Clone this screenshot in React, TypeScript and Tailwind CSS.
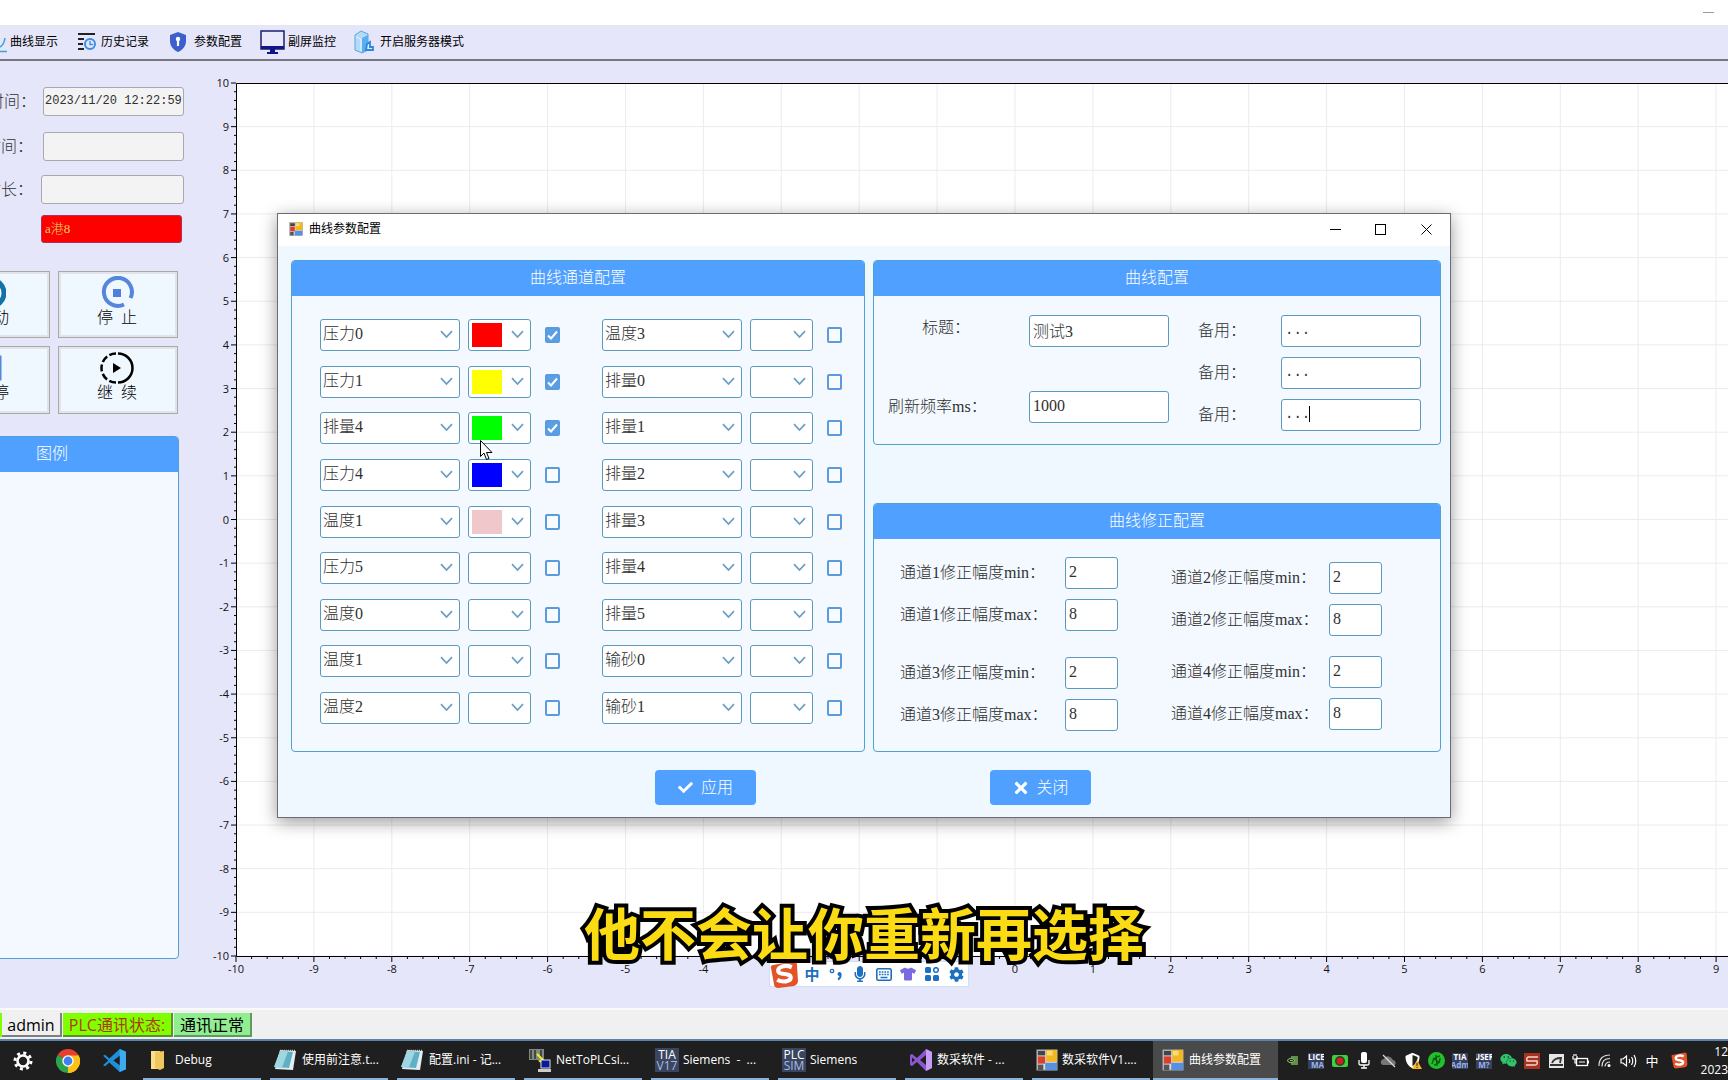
import React from "react";
import { FaCheck, FaTimes, FaMicrophone, FaTshirt, FaCog, FaWeixin, FaShieldAlt } from "react-icons/fa";

const channelsLeft = [
  { name: "压力0", color: "bg-[#ff0000]", on: true },
  { name: "压力1", color: "bg-[#ffff00]", on: true },
  { name: "排量4", color: "bg-[#00ff00]", on: true },
  { name: "压力4", color: "bg-[#0000ff]", on: false },
  { name: "温度1", color: "bg-[#f0c8cb]", on: false },
  { name: "压力5", color: "", on: false },
  { name: "温度0", color: "", on: false },
  { name: "温度1", color: "", on: false },
  { name: "温度2", color: "", on: false },
];

const channelsRight = ["温度3", "排量0", "排量1", "排量2", "排量3", "排量4", "排量5", "输砂0", "输砂1"].map((name) => ({
  name,
  color: "",
  on: false,
}));

type Channel = { name: string; color: string; on: boolean };

const boxClass = "h-8 rounded-[3px] border border-[#5b9ac0] bg-white text-[#303030]";

const Chevron = () => (
  <svg className="pointer-events-none absolute right-[7px] top-[11px]" width="13" height="9" viewBox="0 0 13 9">
    <path d="M1 1.2 L6.5 7 L12 1.2" fill="none" stroke="#6a9ec2" strokeWidth="1.7" />
  </svg>
);

const ChannelRow = ({ channel }: { channel: Channel }) => (
  <div className="flex items-center">
    <div className="relative w-[140px]">
      <select aria-label="通道" className={`${boxClass} block w-full appearance-none pl-[2px] pb-[2px]`}>
        <option>{channel.name}</option>
      </select>
      <Chevron />
    </div>
    <div className="relative ml-2 w-[63px]">
      <select aria-label="颜色" className={`${boxClass} block w-full appearance-none`}></select>
      {channel.color && <span className={`absolute left-1 top-1 h-6 w-[30px] ${channel.color}`}></span>}
      <Chevron />
    </div>
    <div className="relative ml-[14px] h-4 w-[15px]">
      <input
        type="checkbox"
        aria-label="启用"
        defaultChecked={channel.on}
        className="block h-4 w-[15px] appearance-none rounded-[2px] border-2 border-[#5b9bdc] bg-[#f7fbff] checked:bg-[#5b9ee8]"
      />
      {channel.on && (
        <svg className="pointer-events-none absolute left-0 top-0" width="15" height="16" viewBox="0 0 15 16">
          <path d="M3 8.5 L6 11.5 L12 4.5" fill="none" stroke="#fff" strokeWidth="2" />
        </svg>
      )}
    </div>
  </div>
);

const Panel = ({ title, className, children }: { title: string; className: string; children: React.ReactNode }) => (
  <section className={`flex flex-col overflow-hidden rounded-[4px] border border-[#50a0d0] bg-[#f3f9ff] ${className}`}>
    <h2 className="flex h-[35px] shrink-0 items-center justify-center bg-[#50a0ff] pb-[2px] text-white">{title}</h2>
    {children}
  </section>
);

const Field = ({ label, id, value, labelClass, inputClass }: { label: string; id: string; value: string; labelClass: string; inputClass: string }) => (
  <div className="flex items-center">
    <label htmlFor={id} className={`whitespace-nowrap text-[#303030] ${labelClass}`}>
      {label}
    </label>
    <input id={id} defaultValue={value} className={`${boxClass} px-[3px] pb-[3px] outline-none ${inputClass}`} />
  </div>
);

const FormIcon = ({ size }: { size: number }) => (
  <svg width={size} height={size} viewBox="0 0 24 24">
    <rect x="1" y="1" width="22" height="22" fill="#ddd" stroke="#999" />
    <rect x="2" y="2" width="8" height="5" fill="#444" />
    <rect x="2" y="8" width="8" height="8" fill="#d9412f" />
    <rect x="11" y="1" width="12" height="13" fill="#f2b824" />
    <rect x="12" y="2" width="6" height="5" fill="#fbdc7a" />
    <rect x="2" y="17" width="6" height="6" fill="#555" />
    <rect x="10" y="15" width="13" height="8" fill="#5a8fe0" />
  </svg>
);

const Dialog = () => (
  <div
    role="dialog"
    aria-label="曲线参数配置"
    className="absolute left-1/2 top-[213px] flex h-[605px] w-[1174px] -translate-x-1/2 flex-col border border-[#6a6d75] bg-[#f0f8ff] shadow-[0_4px_16px_rgba(0,0,0,0.4)]"
  >
    <div className="flex h-8 shrink-0 items-center bg-white pb-[2px] pl-[11px] font-['Open_Sans','Noto_Sans_CJK_SC',sans-serif] text-[12px] font-normal text-black">
      <FormIcon size={14} />
      <span className="ml-[6px] flex-1">曲线参数配置</span>
      <button aria-label="最小化" className="flex w-[45px] justify-center">
        <svg width="11" height="11" viewBox="0 0 11 11"><path d="M0 5.5H11" stroke="#000" /></svg>
      </button>
      <button aria-label="最大化" className="flex w-[45px] justify-center">
        <svg width="11" height="11" viewBox="0 0 11 11"><rect x="0.5" y="0.5" width="10" height="10" fill="none" stroke="#000" /></svg>
      </button>
      <button aria-label="关闭窗口" className="flex w-[47px] justify-center">
        <svg width="11" height="11" viewBox="0 0 11 11"><path d="M0.5 0.5L10.5 10.5M10.5 0.5L0.5 10.5" stroke="#000" /></svg>
      </button>
    </div>

    <div className="flex gap-2 pl-[13px] pr-[9px] pt-[14px]">
      <Panel title="曲线通道配置" className="h-[492px] w-[574px] shrink-0">
        <div className="flex flex-1 gap-[42px] px-7 pb-[27px] pt-[23px]">
          <div className="flex flex-col justify-between">
            {channelsLeft.map((c, i) => (
              <ChannelRow key={i} channel={c} />
            ))}
          </div>
          <div className="flex flex-col justify-between">
            {channelsRight.map((c, i) => (
              <ChannelRow key={i} channel={c} />
            ))}
          </div>
        </div>
      </Panel>

      <div className="flex flex-1 flex-col justify-between">
        <Panel title="曲线配置" className="h-[185px]">
          <div className="flex gap-[29px] pl-[14px] pt-[19px]">
            <div className="flex flex-col gap-11">
              <Field id="title" label="标题：" value="测试3" labelClass="w-[141px] pb-[6px] pl-[34px]" inputClass="w-[140px]" />
              <Field id="freq" label="刷新频率ms：" value="1000" labelClass="w-[141px]" inputClass="w-[140px]" />
            </div>
            <div className="flex flex-col gap-[10px]">
              <Field id="spare1" label="备用：" value="..." labelClass="w-[83px]" inputClass="w-[140px] font-['Liberation_Mono',monospace] text-[14px]" />
              <Field id="spare2" label="备用：" value="..." labelClass="w-[83px]" inputClass="w-[140px] font-['Liberation_Mono',monospace] text-[14px]" />
              <div className="relative">
                <Field id="spare3" label="备用：" value="..." labelClass="w-[83px]" inputClass="w-[140px] font-['Liberation_Mono',monospace] text-[14px]" />
                <span className="absolute left-[111px] top-[7px] h-4 w-px bg-black"></span>
              </div>
            </div>
          </div>
        </Panel>

        <Panel title="曲线修正配置" className="h-[249px]">
          <div className="flex items-start gap-[53px] pl-[26px]">
            <div className="flex flex-col gap-[26px] pt-[18px]">
              {[1, 3].map((n) => (
                <div key={n} className="flex flex-col gap-[10px]">
                  <Field id={`min${n}`} label={`通道${n}修正幅度min：`} value="2" labelClass="w-[165px]" inputClass="w-[53px]" />
                  <Field id={`max${n}`} label={`通道${n}修正幅度max：`} value="8" labelClass="w-[165px]" inputClass="w-[53px]" />
                </div>
              ))}
            </div>
            <div className="flex flex-col gap-5 pt-[23px]">
              {[2, 4].map((n) => (
                <div key={n} className="flex flex-col gap-[10px]">
                  <Field id={`min${n}`} label={`通道${n}修正幅度min：`} value="2" labelClass="w-[158px]" inputClass="w-[53px]" />
                  <Field id={`max${n}`} label={`通道${n}修正幅度max：`} value="8" labelClass="w-[158px]" inputClass="w-[53px]" />
                </div>
              ))}
            </div>
          </div>
        </Panel>
      </div>
    </div>

    <div className="flex justify-center gap-[234px] pl-[18px] pt-[18px]">
      <button className="flex h-[35px] w-[101px] items-center justify-center gap-2 rounded-[4px] bg-[#50a0ff] text-white">
        <FaCheck size={15} />
        应用
      </button>
      <button className="flex h-[35px] w-[101px] items-center justify-center gap-[6px] rounded-[4px] bg-[#50a0ff] text-white">
        <FaTimes size={18} />
        关闭
      </button>
    </div>
  </div>
);

// plot origin inside the svg, and pixels per unit
const X0 = 36;
const Y0 = 22;
const STEP_X = 77.9;
const STEP_Y = 43.65;

const Chart = () => {
  const bottom = Y0 + 20 * STEP_Y;
  const units = Array.from({ length: 21 }, (_, i) => i);
  const minor = Array.from({ length: 101 }, (_, i) => i);
  return (
    <svg className="h-[930px] w-[1640px] shrink-0" fontSize="11" fill="#111">
      <rect x={X0} y={Y0} width={20 * STEP_X} height={20 * STEP_Y} fill="#fff" />
      {units.map((i) => (
        <g key={i}>
          <path d={`M${X0 + i * STEP_X} ${Y0}V${bottom}M${X0} ${Y0 + i * STEP_Y}H${X0 + 20 * STEP_X}`} stroke="#ececec" />
        </g>
      ))}
      {minor.map((i) => (
        <path
          key={i}
          d={`M${X0 + (i * STEP_X) / 5} ${bottom}v${i % 5 ? 3 : 6}M${X0} ${Y0 + (i * STEP_Y) / 5}h${i % 5 ? -2 : -5}`}
          stroke="#000"
        />
      ))}
      <path d={`M${X0 + 20 * STEP_X} 22.5H${X0 + 0.5}V${Math.floor(bottom) + 0.5}H${X0 + 20 * STEP_X}`} fill="none" stroke="#000" />
      {units.map((i) => (
        <g key={i}>
          <text x={X0 - 7} y={Y0 + i * STEP_Y + 4} textAnchor="end">{10 - i}</text>
          <text x={X0 + i * STEP_X} y={bottom + 17} textAnchor="middle">{i - 10}</text>
        </g>
      ))}
    </svg>
  );
};

const SideButton = ({ text, children }: { text: string; children: React.ReactNode }) => (
  <button className="flex w-[120px] shrink-0 flex-col items-center border border-[#a9a9a9] bg-[#f0f8ff] pr-[2px] pt-1 text-black shadow-[inset_0_0_0_2px_#e2e4ea]">
    {children}
    <span className="whitespace-pre leading-4">{text}</span>
  </button>
);

const Sidebar = () => (
  <aside className="flex w-[184px] shrink-0 flex-col items-end pt-[26px] text-[#303030]">
    <div className="flex items-center justify-end">
      <label htmlFor="now" className="whitespace-nowrap pr-[7px]">时间：</label>
      <input id="now" readOnly defaultValue="2023/11/20 12:22:59" className="h-[29px] w-[141px] shrink-0 rounded-[3px] border border-[#a8a8b0] bg-[#f3f3f3] px-px pb-[2px] font-['Liberation_Mono',monospace] text-[12px]" />
    </div>
    <div className="mt-4 flex items-center justify-end">
      <label htmlFor="start" className="whitespace-nowrap pr-[10px]">时间：</label>
      <input id="start" readOnly className="h-[29px] w-[141px] shrink-0 rounded-[3px] border border-[#a8a8b0] bg-[#f3f3f3]" />
    </div>
    <div className="mt-[14px] flex items-center justify-end">
      <label htmlFor="span" className="whitespace-nowrap pr-2">时长：</label>
      <input id="span" readOnly className="h-[29px] w-[143px] shrink-0 rounded-[3px] border border-[#a8a8b0] bg-[#f3f3f3]" />
    </div>
    <input aria-label="名称" defaultValue="a港8" className="mr-[2px] mt-[11px] h-7 w-[141px] rounded-[3px] border border-[#b03060] bg-[#ff0000] px-[3px] pb-[3px] text-[13px] text-[#e0d060]" />

    <div className="mr-[6px] mt-7 flex h-[67px] justify-end gap-2">
      <SideButton text="启  动">
        <svg width="34" height="34" viewBox="0 0 34 34"><circle cx="19" cy="17" r="13" fill="none" stroke="#1272a8" strokeWidth="5" /></svg>
      </SideButton>
      <SideButton text="停  止">
        <svg width="34" height="34" viewBox="0 0 34 34">
          <path d="M24 28.5 A14 14 0 1 1 30.5 22" fill="none" stroke="#5685dc" strokeWidth="4" />
          <rect x="13" y="13" width="8" height="8" fill="#4f80e0" />
        </svg>
      </SideButton>
    </div>
    <div className="mr-[6px] mt-2 flex h-[68px] justify-end gap-2">
      <SideButton text="暂  停">
        <svg width="34" height="34" viewBox="0 0 34 34"><rect x="7" y="6" width="21" height="22" fill="none" stroke="#5685dc" strokeWidth="3" /></svg>
      </SideButton>
      <SideButton text="继  续">
        <svg width="34" height="34" viewBox="0 0 34 34">
          <path d="M18 2.5 A14.5 14.5 0 0 1 18 31.5" fill="none" stroke="#000" strokeWidth="2.5" />
          <path d="M16 31.5 A14.5 14.5 0 0 1 16 2.5" fill="none" stroke="#000" strokeWidth="2.5" strokeDasharray="7 2.6" />
          <path d="M13 12V22L21 17Z" fill="#000" />
        </svg>
      </SideButton>
    </div>

    <section className="mr-[5px] mt-[22px] flex h-[523px] w-[254px] shrink-0 flex-col overflow-hidden rounded-[4px] border border-[#50a0d8] bg-[#f3f9ff]">
      <h2 className="flex h-[35px] items-center justify-center bg-[#50a0ff] pb-[2px] text-white">图例</h2>
    </section>
  </aside>
);

const Toolbar = () => (
  <nav className="flex h-[36px] shrink-0 items-center overflow-hidden border-b-2 border-[#77777f] font-['Open_Sans','Noto_Sans_CJK_SC',sans-serif] text-[12px] font-normal text-black">
    <button className="flex items-center gap-[3px]">
      <svg width="7" height="22" viewBox="0 0 7 22"><path d="M0 16 Q4 14 5 7M0 20.5H7" fill="none" stroke="#3aa6d8" strokeWidth="1.6" /></svg>
      曲线显示
    </button>
    <button className="ml-[19px] flex items-center gap-[5px]">
      <svg width="19" height="20" viewBox="0 0 19 20">
        <path d="M1 2H18M1 7H7M1 12H6M1 17H7" stroke="#222" strokeWidth="2" />
        <circle cx="13" cy="12" r="5" fill="none" stroke="#3b8ee8" strokeWidth="2" />
        <path d="M13 9V12.5H16" fill="none" stroke="#3b8ee8" strokeWidth="1.4" />
      </svg>
      历史记录
    </button>
    <button className="ml-[21px] flex items-center gap-2">
      <svg width="16" height="20" viewBox="0 0 16 20">
        <path d="M8 0L16 3V9C16 14.5 12.5 18 8 20C3.5 18 0 14.5 0 9V3Z" fill="#3d5fcb" />
        <path d="M8 6V14" stroke="#fff" strokeWidth="2.2" />
        <circle cx="8" cy="7" r="2.2" fill="#fff" />
      </svg>
      参数配置
    </button>
    <button className="ml-[18px] flex items-center gap-[3px]">
      <svg width="25" height="24" viewBox="0 0 25 24">
        <rect x="1" y="1" width="23" height="18" fill="#e8eafc" stroke="#1b1f6e" strokeWidth="1.5" />
        <path d="M1 17.5H24" stroke="#10158a" strokeWidth="3" />
        <path d="M10 19H15V22H18V24H7V22H10Z" fill="#10158a" />
      </svg>
      副屏监控
    </button>
    <button className="ml-[18px] flex items-center gap-[5px]">
      <svg width="21" height="24" viewBox="0 0 21 24">
        <path d="M1 5L7 1L14 4V20L8 23L1 20Z" fill="#b4daf6" stroke="#5aa5dc" />
        <path d="M8 8V23L14 20V5Z" fill="#5aaef0" />
        <path d="M2 7L7 9V21" fill="none" stroke="#e8f6ff" />
        <path d="M13 14L16 12V17H19V20H12Z" fill="#dcefff" stroke="#2f86dc" strokeWidth="1.8" />
      </svg>
      开启服务器模式
    </button>
  </nav>
);

const SogouIcon = ({ size }: { size: number }) => (
  <svg width={size} height={size} viewBox="0 0 28 28">
    <path d="M2 5L23 1Q26 1 26 4L27 20Q27 24 23 25L8 27Q4 27 4 24L1 8Q0 6 2 5Z" fill="#e2532a" />
    <path d="M21 7C14 4 7 7 8 11C9 15 20 12 20 17C20 21 12 22 7 19" fill="none" stroke="#fff" strokeWidth="4" />
  </svg>
);

const ImeBar = () => (
  <div className="absolute left-[769px] top-[961px] flex h-[26px] w-[200px] items-center border border-[#cfe0f4] bg-white text-[#1d6fc0]">
    <span className="w-[30px]"><SogouIcon size={29} /></span>
    <span className="w-6 text-center font-['Noto_Sans_CJK_SC',sans-serif] text-[15px] font-bold">中</span>
    <span className="flex w-6 justify-center">
      <svg width="14" height="14" viewBox="0 0 14 14"><circle cx="3" cy="4" r="1.7" fill="none" stroke="currentColor" strokeWidth="1.3" /><circle cx="10.500" cy="7" r="2" fill="currentColor" /><path d="M11.5 7.5Q12 11 9 12.500" fill="none" stroke="currentColor" strokeWidth="2" /></svg>
    </span>
    <span className="flex w-6 justify-center"><FaMicrophone size={16} /></span>
    <span className="flex w-6 justify-center">
      <svg width="16" height="13" viewBox="0 0 16 13"><rect x="0.8" y="0.8" width="14.4" height="11.4" rx="1.5" fill="none" stroke="currentColor" strokeWidth="1.6" /><path d="M3 4H13M3 6.5H13" stroke="currentColor" strokeWidth="1.5" strokeDasharray="1.7 1" /><path d="M4.5 9.5H11.5" stroke="currentColor" strokeWidth="1.5" /></svg>
    </span>
    <span className="flex w-6 justify-center text-[#7a6be0]"><FaTshirt size={16} /></span>
    <span className="flex w-6 justify-center">
      <svg width="14" height="14" viewBox="0 0 14 14" fill="currentColor"><rect width="6" height="6" rx="1.5" /><circle cx="11" cy="3" r="2.3" fill="none" stroke="currentColor" strokeWidth="1.5" /><rect y="8" width="6" height="6" rx="1.5" /><rect x="8" y="8" width="6" height="6" rx="1.5" /></svg>
    </span>
    <span className="flex w-6 justify-center"><FaCog size={15} /></span>
  </div>
);

const StatusBar = () => (
  <footer className="flex h-[31px] shrink-0 items-center border-t-2 border-[#fafafa] bg-[#f0f0f0] font-['Open_Sans','Noto_Sans_CJK_SC',sans-serif] text-[16px] font-normal leading-6 text-black">
    <span className="h-6 w-[2px] bg-[#80ff00]"></span>
    <span className="h-6 w-[60px] border-b-2 border-r-2 border-[#808080] text-center">admin</span>
    <span className="ml-px h-6 w-[110px] whitespace-nowrap border-b-2 border-r-2 border-[#5f8f30] bg-[#80ff00] text-center text-[#b03a10]">PLC通讯状态:</span>
    <span className="ml-px h-6 w-[78px] border-b-2 border-r-2 border-[#5f9a5f] bg-[#90ee90] text-center">通讯正常</span>
  </footer>
);

const Notepad = () => (
  <svg width="24" height="24" viewBox="0 0 24 24">
    <path d="M6 2L22 3L19 22L1 21Z" fill="#e4eef2" />
    <path d="M6 3L19 4L15 20L0 19Z" fill="#5fb0c4" />
    <path d="M6 3L14 3.5L8 19.5L0 19Z" fill="#9fd6e2" />
    <path d="M6 2.5H21" stroke="#ccc" strokeWidth="1.5" strokeDasharray="1 1" />
  </svg>
);

const TextIcon = ({ top, bottom }: { top: string; bottom: string }) => (
  <span className="flex h-6 w-6 flex-col items-center justify-center overflow-hidden bg-[#3a4560] text-[12px] font-medium leading-[11px]">
    <span>{top}</span>
    <span className="text-[#a8bce0]">{bottom}</span>
  </span>
);

const tasks = [
  {
    text: "Debug",
    icon: (
      <svg width="24" height="24" viewBox="0 0 24 24"><path d="M4 3H13V21H4Z" fill="#fbe08c" /><path d="M8 4L17 3V20L13 22L8 20Z" fill="#f0c75e" /></svg>
    ),
  },
  { text: "使用前注意.t...", icon: <Notepad /> },
  { text: "配置.ini - 记...", icon: <Notepad /> },
  {
    text: "NetToPLCsi...",
    icon: (
      <svg width="24" height="24" viewBox="0 0 24 24">
        <rect x="1" y="1" width="15" height="11" fill="#7f8a80" />
        <path d="M3 2V11M7 2V11M13 2V11" stroke="#333" strokeWidth="1.5" />
        <path d="M9 6L15 12L12 13L17 17" fill="none" stroke="#f4ee20" strokeWidth="2" />
        <rect x="13" y="12" width="9" height="8" fill="#0a1a9a" stroke="#ddd" />
        <rect x="10" y="21" width="13" height="3" fill="#ccc" />
      </svg>
    ),
  },
  { text: "Siemens  -  ...", icon: <TextIcon top="TIA" bottom="V17" /> },
  { text: "Siemens", icon: <TextIcon top="PLC" bottom="SIM" /> },
  {
    text: "数采软件 - ...",
    icon: (
      <svg width="24" height="24" viewBox="0 0 24 24">
        <path d="M17 1L23 4V20L17 23L8 14L3 18L1 17V7L3 6L8 10Z" fill="#8a57cf" />
        <path d="M17 1L23 4V20L17 23Z" fill="#c79cf4" />
        <path d="M17 7V17L11 12ZM3 9.5L6 12L3 14.5Z" fill="#1f1f1f" />
      </svg>
    ),
  },
  { text: "数采软件V1....", icon: <FormIcon size={22} /> },
];

const tray = [
  <svg width="12" height="9" viewBox="0 0 12 9"><path d="M5 0H12V9H5Z" fill="#5f8f4a" /><path d="M1 4.5Q5 0 9 4.5Q5 9 1 4.5M4 4.5H7" fill="#1f2a1a" stroke="#8fc070" /></svg>,
  <span className="flex h-4 w-4 flex-col overflow-hidden bg-[#35415e] text-[8px] font-bold leading-2"><span>LICEN</span><span className="self-end text-[#9db4e4]">MA</span></span>,
  <svg width="16" height="14" viewBox="0 0 16 14"><rect y="1" width="16" height="12" rx="2" fill="#3fd03f" /><circle cx="8" cy="7" r="5" fill="#1c4a1c" /><circle cx="8" cy="7" r="3.5" fill="#d01c2c" /></svg>,
  <svg width="12" height="17" viewBox="0 0 12 17"><rect x="3" y="0" width="6" height="11" rx="2" fill="#fff" /><path d="M1 8V12Q1 13 3 13H9Q11 13 11 12V8M6 13V16M3 16H9" fill="none" stroke="#fff" strokeWidth="1.3" /></svg>,
  <svg width="17" height="14" viewBox="0 0 17 14"><path d="M3 11Q0 10 1 7Q2 5 4 5Q6 1 10 3Q12 4 13 6Q17 7 15 11Z" fill="#777" /><path d="M3 1L15 13" stroke="#ddd" strokeWidth="1.3" /></svg>,
  <span className="relative"><FaShieldAlt size={15} /><svg className="absolute left-[7px] top-[7px]" width="10" height="9" viewBox="0 0 10 9"><path d="M5 0L10 9H0Z" fill="#f6b62c" /><path d="M5 3V6M5 7V8" stroke="#222" /></svg></span>,
  <svg width="17" height="17" viewBox="0 0 17 17"><circle cx="8.5" cy="8.5" r="8.5" fill="#22c02c" /><path d="M4 12Q5 5 12 4M6 13Q12 12 12 6M5 6L12 11M8 3L9 14" fill="none" stroke="#0c5a14" strokeWidth="1.4" /></svg>,
  <span className="flex h-4 w-4 flex-col items-center overflow-hidden bg-[#35415e] text-[8px] font-bold leading-2"><span>TIA</span><span className="text-[#9db4e4]">Adm</span></span>,
  <span className="flex h-4 w-4 flex-col items-center overflow-hidden bg-[#35415e] text-[8px] font-bold leading-2"><span>USER</span><span className="text-[#9db4e4]">M?</span></span>,
  <span className="text-[#2fc46a]"><FaWeixin size={17} /></span>,
  <svg width="16" height="16" viewBox="0 0 16 16"><rect width="16" height="16" fill="#a83220" /><path d="M14 4H5Q2 4 3 8H13Q14 12 11 12H2" fill="none" stroke="#f0d8d0" strokeWidth="1.5" /></svg>,
  <svg width="15" height="14" viewBox="0 0 15 14"><rect width="15" height="14" fill="#e6e6e6" /><path d="M3 9Q5 4 12 4L11 9M1 11H14" fill="none" stroke="#333" strokeWidth="1.8" /></svg>,
  <svg width="17" height="14" viewBox="0 0 17 14"><rect x="4.5" y="4.5" width="11" height="7" fill="none" stroke="#fff" strokeWidth="1.3" /><path d="M1 2V5H5V2M2 0V2M4 0V2M3 5V9H5M16.5 6.5V9.5M7 8H13" fill="none" stroke="#fff" strokeWidth="1.2" /></svg>,
  <svg width="13" height="13" viewBox="0 0 13 13"><path d="M1 12Q1 1 12 1M4 12.5Q4 4.5 12 4.5M7 12.5Q7.5 8 12 8" fill="none" stroke="#ddd" strokeWidth="1.2" /><circle cx="11" cy="11.5" r="1.5" fill="#fff" /></svg>,
  <svg width="17" height="14" viewBox="0 0 17 14"><path d="M1 5H3L6.5 2V12L3 9H1ZM9 5Q10.5 7 9 9M11.5 3Q14 7 11.5 11M14 1Q17.5 7 14 13" fill="none" stroke="#fff" strokeWidth="1.2" /></svg>,
  <span className="text-[13px]">中</span>,
];

const Taskbar = () => (
  <div className="flex h-[41px] shrink-0 items-stretch overflow-hidden border-t-2 border-[#5a84aa] bg-[#1f1f1f] font-['Open_Sans','Noto_Sans_CJK_SC',sans-serif] text-[12px] font-normal text-white">
    <button aria-label="设置" className="flex w-[45px] shrink-0 items-center justify-center">
      <svg width="20" height="20" viewBox="0 0 20 20"><circle cx="10" cy="10" r="5.5" fill="none" stroke="#fff" strokeWidth="2.6" /><circle cx="10" cy="10" r="8" fill="none" stroke="#fff" strokeWidth="3" strokeDasharray="3 3.283" /></svg>
    </button>
    <button aria-label="Chrome" className="flex w-[46px] shrink-0 items-center justify-center">
      <svg width="24" height="24" viewBox="0 0 24 24">
        <path d="M12 12L1.6 6A12 12 0 0 1 22.4 6Z" fill="#e5402f" />
        <path d="M12 12L22.4 6A12 12 0 0 1 12 24Z" fill="#fbc116" />
        <path d="M12 12L12 24A12 12 0 0 1 1.6 6Z" fill="#2ea24c" />
        <path d="M12 6.5H22.6A12 12 0 0 1 12 24L16.8 14.8Z" fill="#fbc116" />
        <circle cx="12" cy="12" r="5.7" fill="#fff" />
        <circle cx="12" cy="12" r="4.4" fill="#3f7ff0" />
      </svg>
    </button>
    <button aria-label="VS Code" className="flex w-[46px] shrink-0 items-center justify-center">
      <svg width="25" height="25" viewBox="0 0 24 24">
        <path d="M17 1L23 3.5V20.5L17 23L7 14L3 17.5L1 16.5L6 12L1 7.5L3 6.5L7 10Z" fill="#1f8fd8" />
        <path d="M17 1L23 3.5V20.5L17 23Z" fill="#3cabf0" />
        <path d="M17 7.5V16.5L11 12Z" fill="#1f1f1f" />
      </svg>
    </button>
    <div className="ml-[6px] flex shrink-0 gap-[9px]">
      {tasks.map((t, i) => (
        <button key={i} className="flex w-[118px] items-center gap-1 whitespace-pre border-b-2 border-[#86b4dc] pl-1">
          {t.icon}
          {t.text}
        </button>
      ))}
    </div>
    <button className="ml-[3px] flex w-[125px] shrink-0 items-center gap-[5px] border-b-2 border-[#86b4dc] bg-[#4a4a4a] pl-[9px]">
      <FormIcon size={22} />
      曲线参数配置
    </button>
    <div className="ml-[2px] flex shrink-0 items-center">
      {tray.map((icon, i) => (
        <span key={i} className="flex w-6 justify-center">{icon}</span>
      ))}
      <span className="flex w-[30px] justify-center"><SogouIcon size={17} /></span>
    </div>
    <div className="ml-auto flex shrink-0 flex-col items-end justify-center leading-[18px]">
      <span>12</span>
      <span>2023</span>
    </div>
  </div>
);

export default function App() {
  return (
    <div className="relative flex h-screen flex-col overflow-hidden bg-[#e6e6fa] font-['Liberation_Serif','Noto_Sans_CJK_SC',serif] text-[16px] font-light leading-6">
      <header className="flex h-[25px] shrink-0 items-center justify-end bg-white pr-[14px]">
        <button aria-label="最小化主窗口" className="h-px w-[11px] bg-[#999]"></button>
      </header>
      <Toolbar />
      <main className="flex min-h-0 flex-1 overflow-hidden">
        <Sidebar />
        <div className="ml-4 flex-1 overflow-hidden font-['Open_Sans',sans-serif] font-normal">
          <Chart />
        </div>
      </main>
      <StatusBar />
      <Taskbar />

      <Dialog />
      <ImeBar />
      <p className="absolute inset-x-0 top-[903px] text-center font-['Noto_Sans_CJK_SC',sans-serif] text-[56px] font-bold leading-[56px] text-[#fbdc14] [-webkit-text-stroke:8px_#000] [paint-order:stroke_fill]">
        他不会让你重新再选择
      </p>
      <svg className="pointer-events-none absolute left-[480px] top-[440px]" width="13" height="21" viewBox="0 0 13 21">
        <path d="M0.5 0.5V16.5L4 13L6.5 19.5L9 18.5L6.5 12.5H12Z" fill="#fff" stroke="#000" />
      </svg>
    </div>
  );
}
